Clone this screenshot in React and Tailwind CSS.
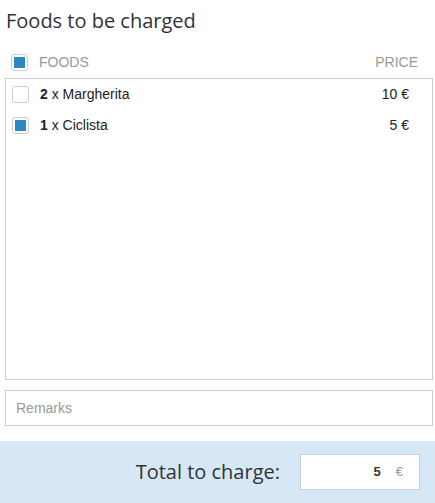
const items = [
  { qty: 2, name: 'Margherita', price: 10, checked: false },
  { qty: 1, name: 'Ciclista', price: 5, checked: true },
]

function Check({ checked }) {
  return (
    <span className="w-[17px] h-[17px] rounded-[3px] border border-[#ccc] bg-white flex items-center justify-center shrink-0">
      {checked && <span className="w-[11px] h-[11px] bg-[#2d87c3]" />}
    </span>
  )
}

export default function App() {
  const total = items.filter(i => i.checked).reduce((s, i) => s + i.price, 0)
  return (
    <div className="w-[435px] h-[503px] bg-white flex flex-col font-['Liberation_Sans',Arial,sans-serif] text-[14px] text-[#222]">
      <h1 className="font-['Open_Sans',sans-serif] text-[20px] text-[#333] leading-none pl-[6px] pt-[11px]">Foods to be charged</h1>

      <div className="flex items-center mt-[23px] pl-[11px] pr-[17px] h-[17px]">
        <Check checked />
        <span className="ml-[11px] text-[#999]">FOODS</span>
        <span className="ml-auto text-[#999]">PRICE</span>
      </div>

      <div className="ml-[5px] w-[428px] mt-[7px] h-[302px] border border-[#ccc] pt-[7px]">
        {items.map(item => (
          <div key={item.name} className="flex items-center h-[17px] mb-[14px] pl-[6px] pr-[23px]">
            <Check checked={item.checked} />
            <span className="ml-[11px]"><b>{item.qty}</b> x {item.name}</span>
            <span className="ml-auto">{item.price} €</span>
          </div>
        ))}
      </div>

      <div className="ml-[5px] w-[428px] mt-[10px] h-[36px] border border-[#ccc] flex items-center pl-[10px] text-[#999]">
        Remarks
      </div>

      <div className="mt-auto h-[62px] bg-[#d6e8f5] flex items-center justify-end pr-[15px]">
        <span className="font-['Open_Sans',sans-serif] text-[20px] text-[#333] mr-[20px]">Total to charge:</span>
        <div className="w-[120px] h-[36px] bg-white border border-[#ccc] flex items-center justify-end pr-[16px]">
          <b className="text-[#333] text-[13px]">{total}</b>
          <span className="ml-[15px] text-[#999] text-[13px]">€</span>
        </div>
      </div>
    </div>
  )
}
